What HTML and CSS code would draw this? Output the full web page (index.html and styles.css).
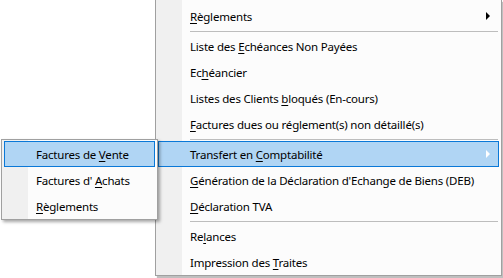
FILE: index.html
```html
<!DOCTYPE html>
<html lang="fr">
<head>
    <meta charset="UTF-8">
    <link rel="stylesheet" href="styles.css">
    <title>Menu</title>
</head>
<body>
    <div class="menu main-menu">
        <div class="item has-sub"><span><u>R</u>èglements</span><span class="arrow"></span></div>
        <div class="sep"></div>
        <div class="item"><span>Liste des <u>E</u>chéances Non Payées</span></div>
        <div class="item"><span>Ec<u>h</u>éancier</span></div>
        <div class="item"><span>Listes des Clients <u>b</u>loqués (En-cours)</span></div>
        <div class="item"><span><u>F</u>actures dues ou réglement(s) non détaillé(s)</span></div>
        <div class="sep"></div>
        <div class="item has-sub active"><span>Transfert en <u>C</u>omptabilité</span><span class="arrow"></span></div>
        <div class="item"><span><u>G</u>énération de la Déclaration d'Echange de Biens (DEB)</span></div>
        <div class="item"><span><u>D</u>éclaration TVA</span></div>
        <div class="sep"></div>
        <div class="item"><span>Re<u>l</u>ances</span></div>
        <div class="item"><span>Impression des <u>T</u>raites</span></div>
    </div>

    <div class="menu sub-menu">
        <div class="item active"><span>Factures de <u>V</u>ente</span></div>
        <div class="item"><span>Factures d' <u>A</u>chats</span></div>
        <div class="item"><span><u>R</u>èglements</span></div>
    </div>
</body>
</html>
```

FILE: styles.css
```css
body {
    margin: 0;
    background-color: #ffffff;
    font-family: 'Noto Sans', 'Open Sans', sans-serif;
    font-size: 11.5px;
    letter-spacing: -0.2px;
    color: #000000;
    position: relative;
    height: 278px;
    overflow: hidden;
}

.menu {
    border: 1px solid #a0a0a0;
    background: linear-gradient(to right, #f0f0f0 26px, #fcfcfc 26px);
    box-sizing: border-box;
}

.main-menu {
    margin-left: 155px;
    width: 347px;
    border-top: 0;
    padding: 3px 2px 0 2px;
    box-shadow: 2px 2px 1px rgba(0, 0, 0, 0.25);
}

.sub-menu {
    position: absolute;
    left: 1px;
    top: 139px;
    width: 157px;
    padding: 1px 2px 0 2px;
    box-shadow: 2px 2px 3px rgba(0, 0, 0, 0.35);
}

.item {
    height: 26px;
    display: flex;
    align-items: center;
    justify-content: space-between;
    padding-left: 32px;
    padding-right: 9px;
    box-sizing: border-box;
    white-space: nowrap;
}

.item u {
    text-decoration-thickness: 1px;
    text-underline-offset: 2px;
}

.item.active {
    background-color: #b0d5f4;
    border: 1px solid #0a78d7;
    padding-left: 31px;
    padding-right: 8px;
}

.sep {
    height: 4px;
    display: flex;
    align-items: center;
    padding-left: 32px;
}

.sep::after {
    content: '';
    flex: 1;
    height: 1px;
    background-color: #bdbdbd;
    margin-right: 1px;
}

.arrow {
    width: 0;
    height: 0;
    border-top: 4px solid transparent;
    border-bottom: 4px solid transparent;
    border-left: 4px solid #000000;
}

.item.active .arrow {
    border-left-color: #ffffff;
}
```
